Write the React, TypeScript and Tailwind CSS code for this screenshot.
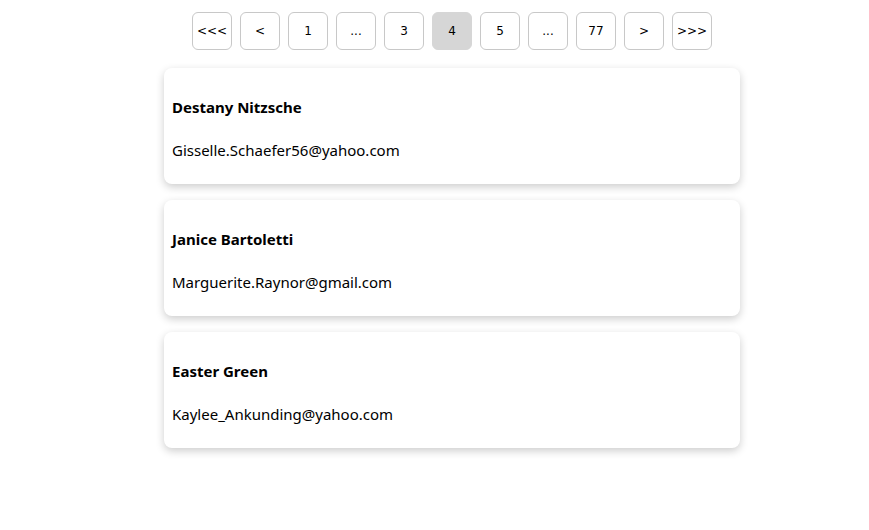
import React from 'react';

const pages = ['<<<', '<', '1', '...', '3', '4', '5', '...', '77', '>', '>>>'];

const users = [
    { name: 'Destany Nitzsche', email: 'Gisselle.Schaefer56@yahoo.com' },
    { name: 'Janice Bartoletti', email: 'Marguerite.Raynor@gmail.com' },
    { name: 'Easter Green', email: 'Kaylee_Ankunding@yahoo.com' },
];

export default function App() {
    return (
        <div className="min-h-screen bg-white text-black pt-3" style={{ fontFamily: '"Noto Sans", sans-serif' }}>
            <div className="flex gap-2 ml-[192px]">
                {pages.map((p, i) => (
                    <button
                        key={i}
                        className={`w-10 h-[38px] rounded-md border border-[#c8c8c8] text-[12px] flex items-center justify-center ${p === '4' ? 'bg-[#d6d6d6] border-[#d6d6d6]' : 'bg-white'}`}
                        style={{ fontFamily: '"DejaVu Sans", Verdana, sans-serif' }}
                    >
                        {p}
                    </button>
                ))}
            </div>

            <div className="w-[576px] ml-[164px] mt-[18px] flex flex-col gap-4">
                {users.map(u => (
                    <div key={u.email} className="bg-white rounded-lg shadow-[0_3px_8px_rgba(0,0,0,0.2)] px-2 pt-[29px] pb-[23px]">
                        <h3 className="text-[15px] font-bold leading-5">{u.name}</h3>
                        <p className="text-[15px] leading-[22px] mt-[22px]">{u.email}</p>
                    </div>
                ))}
            </div>
        </div>
    );
}
